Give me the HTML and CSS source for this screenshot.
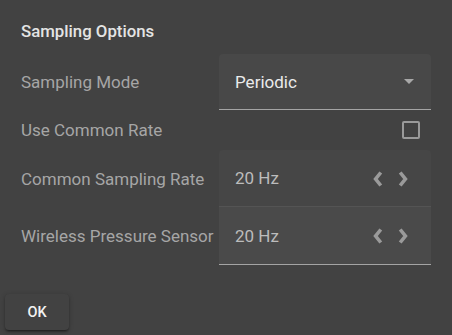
FILE: index.html
```html
<!DOCTYPE html>
<html>
<head>
<meta charset="utf-8">
<link rel="stylesheet" href="styles.css">
</head>
<body>
<div class="dialog">
  <div class="title">Sampling Options</div>
  <div class="form">
    <div class="label">Sampling Mode</div>
    <div class="field select">
      <span class="value bright">Periodic</span>
      <svg class="caret" width="10" height="5" viewBox="0 0 10 5"><polygon points="0,0 10,0 5,5" fill="#a8a8a8"/></svg>
    </div>

    <div class="label">Use Common Rate</div>
    <div class="check-cell"><span class="checkbox"></span></div>

    <div class="label">Common Sampling Rate</div>
    <div class="field stepper disabled">
      <span class="value">20 Hz</span>
      <span class="arrows">
        <svg width="10" height="16" viewBox="0 0 10 16"><polyline points="7.8,1.5 2.6,8 7.8,14.5" fill="none" stroke="#9a9a9a" stroke-width="3.6"/></svg>
        <svg width="10" height="16" viewBox="0 0 10 16"><polyline points="2.2,1.5 7.4,8 2.2,14.5" fill="none" stroke="#9a9a9a" stroke-width="3.6"/></svg>
      </span>
    </div>

    <div class="label">Wireless Pressure Sensor</div>
    <div class="field stepper active">
      <span class="value">20 Hz</span>
      <span class="arrows">
        <svg width="10" height="16" viewBox="0 0 10 16"><polyline points="7.8,1.5 2.6,8 7.8,14.5" fill="none" stroke="#9a9a9a" stroke-width="3.6"/></svg>
        <svg width="10" height="16" viewBox="0 0 10 16"><polyline points="2.2,1.5 7.4,8 2.2,14.5" fill="none" stroke="#9a9a9a" stroke-width="3.6"/></svg>
      </span>
    </div>
  </div>
  <div class="actions">
    <button class="ok">OK</button>
  </div>
</div>
</body>
</html>
```
FILE: styles.css
```css
html, body {
  margin: 0;
  background: #424242;
  height: 100%;
}
.dialog {
  font-family: Roboto, "Liberation Sans", sans-serif;
  padding: 20px 0 0 0;
}
.title {
  padding-left: 21px;
  font-size: 16.8px;
  font-weight: 500;
  line-height: 22px;
  color: #e4e4e4;
  margin-bottom: 12px;
}
.form {
  display: grid;
  grid-template-columns: 198px 212px;
  grid-template-rows: 56px 40px 57px 58px;
  padding-left: 21px;
}
.label {
  display: flex;
  align-items: center;
  font-size: 17px;
  color: #a6a6a6;
  white-space: nowrap;
}
.field {
  display: flex;
  align-items: center;
  padding-left: 16px;
  padding-right: 17px;
  box-sizing: border-box;
  background: #484848;
  border-radius: 4px 4px 0 0;
}
.select {
  border-bottom: 1px solid #a4a4a4;
  padding-right: 17px;
}
.value {
  flex: 1;
  font-size: 17px;
  color: #bcbcbc;
}
.value.bright {
  color: #ebebeb;
  font-size: 17px;
}
.caret {
  display: block;
}
.check-cell {
  display: flex;
  align-items: center;
  justify-content: flex-end;
  padding-right: 11px;
}
.checkbox {
  width: 18px;
  height: 18px;
  box-sizing: border-box;
  border: 2px solid #9a9a9a;
  border-radius: 2px;
}
.stepper.disabled {
  background: #464646;
  border-bottom: 1px solid #545454;
}
.stepper.active {
  background: #4a4a4a;
  border-radius: 0;
  border-bottom: 1px solid #a4a4a4;
}
.arrows {
  display: flex;
  gap: 15px;
  padding-right: 6px;
  padding-top: 1px;
}
.arrows svg {
  display: block;
}
.actions {
  padding: 29px 0 0 5px;
}
.ok {
  width: 64px;
  height: 36px;
  border: none;
  border-radius: 4px;
  background: #424242;
  color: #f2f2f2;
  font-family: Roboto, "Liberation Sans", sans-serif;
  font-size: 14.5px;
  font-weight: 500;
  box-shadow: 0 2px 2px rgba(0,0,0,0.25), 0 1px 5px rgba(0,0,0,0.2), 0 3px 1px -2px rgba(0,0,0,0.2);
}
```
